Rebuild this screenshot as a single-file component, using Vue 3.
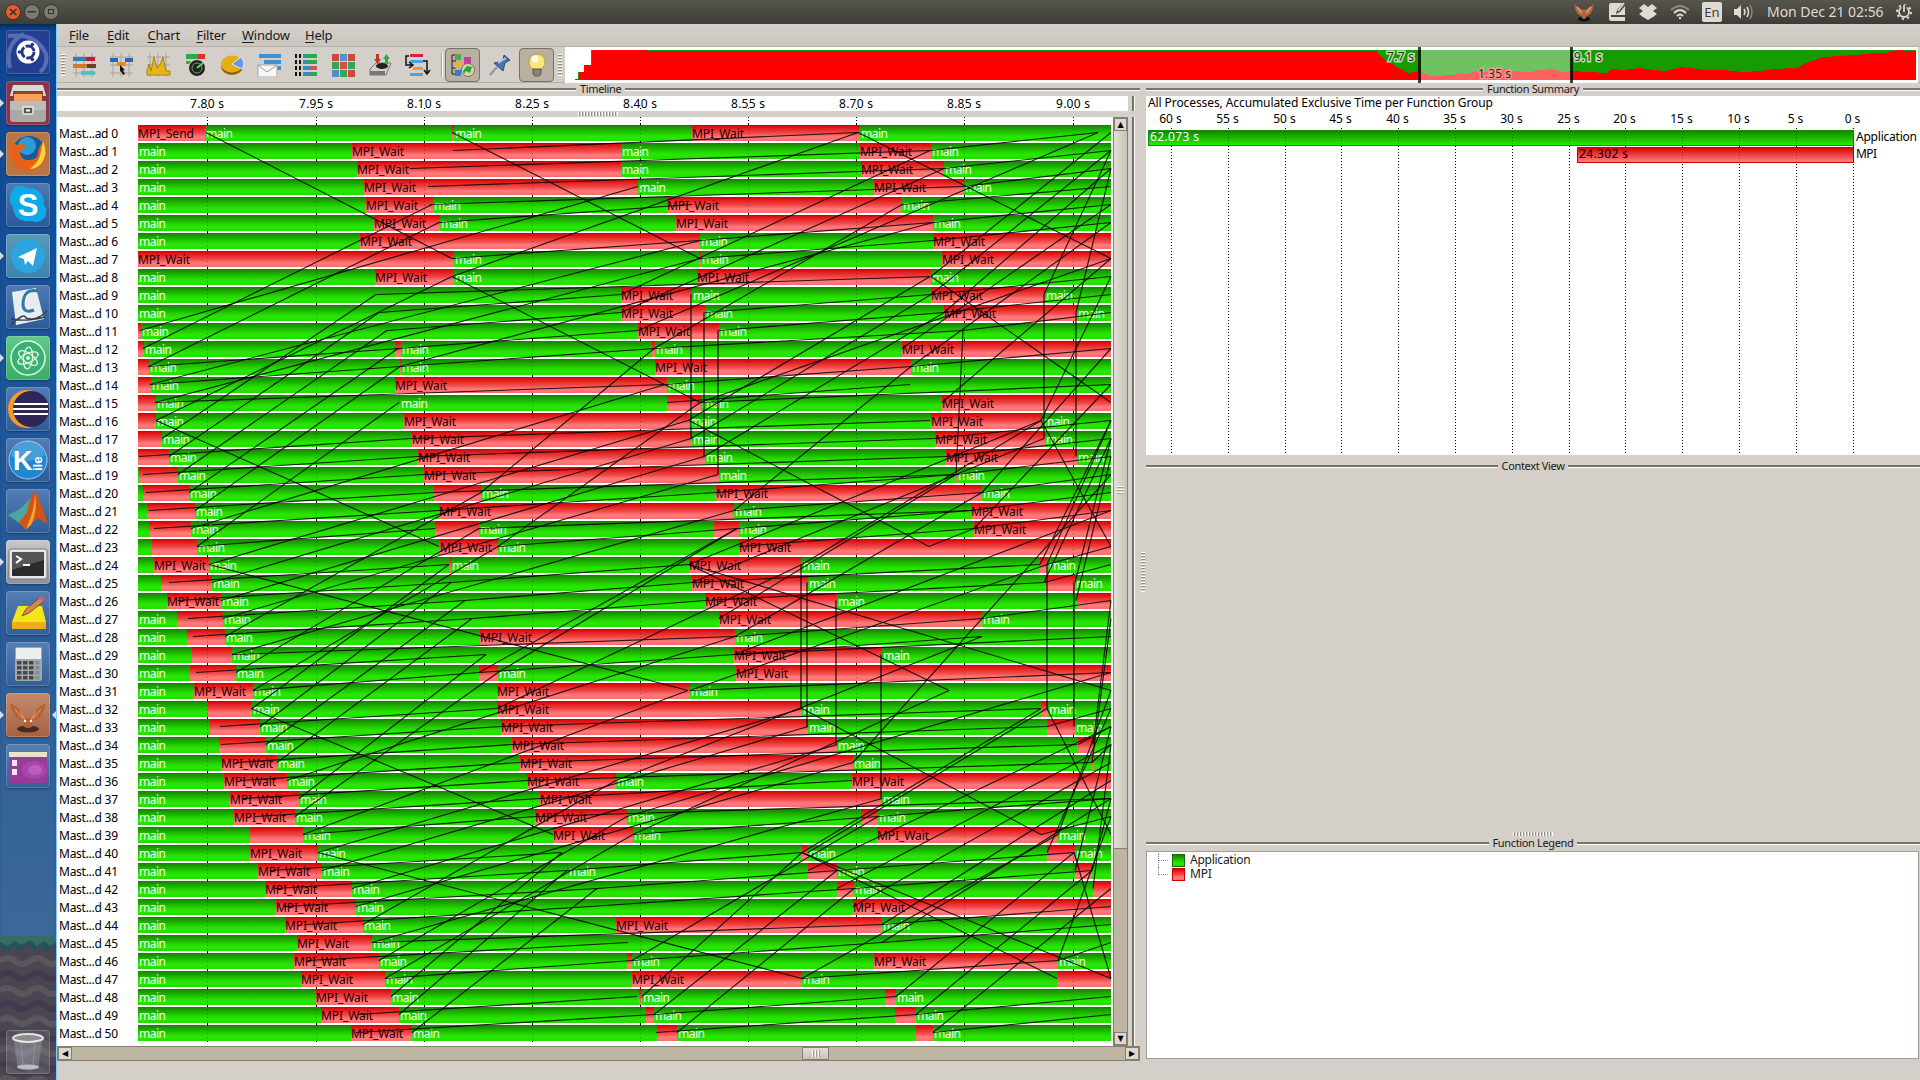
<script setup>
const CHART_LEFT = 138
const CHART_RIGHT = 1111
const PITCH = 18

const menus = [
  { name: 'File', width: 38 }, { name: 'Edit', width: 40.5 }, { name: 'Chart', width: 49 },
  { name: 'Filter', width: 45.5 }, { name: 'Window', width: 63 }, { name: 'Help', width: 30 },
]

const timeTicks = [
  ['7.80 s', 207.5], ['7.95 s', 316.5], ['8.10 s', 424.5], ['8.25 s', 532.5], ['8.40 s', 640.5],
  ['8.55 s', 748.5], ['8.70 s', 856.5], ['8.85 s', 964.5], ['9.00 s', 1073.5],
]

// First letter is the starting state (G: application, R: MPI); numbers are the state changes.
const trace = [
  ['R', 205, 452, 454, 692, 860],
  ['G', 352, 621, 860, 931],
  ['G', 357, 621, 861, 944],
  ['G', 364, 638, 874, 964],
  ['G', 366, 433, 667, 902],
  ['G', 374, 440, 676, 933],
  ['G', 360, 700, 933],
  ['R', 454, 700, 701, 942],
  ['G', 375, 454, 697, 931],
  ['G', 621, 692, 931, 1045],
  ['G', 621, 705, 944, 1077],
  ['R', 141, 638, 719],
  ['R', 144, 395, 401, 652, 655, 902],
  ['R', 149, 400, 401, 655, 911],
  ['R', 151, 395, 667],
  ['R', 156, 399, 400, 667, 701, 942],
  ['R', 156, 404, 689, 931, 1042],
  ['R', 162, 412, 692, 935, 1045],
  ['R', 169, 418, 705, 946, 1077],
  ['G', 139, 178, 424, 719, 956, 957],
  ['G', 143, 189, 434, 481, 716, 982],
  ['G', 147, 195, 439, 734, 971],
  ['G', 149, 191, 435, 479, 714, 739, 974],
  ['G', 152, 197, 440, 498, 739],
  ['G', 154, 209, 450, 451, 689, 802, 1040, 1048],
  ['G', 161, 212, 692, 808, 1045, 1075],
  ['G', 167, 221, 705, 837, 1077],
  ['G', 177, 223, 719, 982],
  ['G', 187, 225, 480, 735],
  ['G', 192, 232, 734, 882],
  ['G', 190, 236, 479, 498, 736],
  ['G', 194, 253, 497, 690],
  ['G', 208, 252, 497, 802, 1041, 1048],
  ['G', 210, 260, 501, 808, 1047, 1075],
  ['G', 219, 266, 512, 837, 1078, 1094],
  ['G', 221, 277, 520, 853, 1092, 1093],
  ['G', 224, 287, 527, 616, 852],
  ['G', 230, 299, 540, 882],
  ['G', 234, 295, 535, 627, 861, 878],
  ['G', 250, 303, 553, 633, 877, 1058],
  ['G', 250, 318, 802, 808, 1047, 1075],
  ['G', 258, 322, 567, 568, 808, 837, 1075, 1092],
  ['G', 265, 352, 837, 854, 1093],
  ['G', 276, 356, 853],
  ['G', 285, 363, 616, 882],
  ['G', 297, 372],
  ['G', 294, 379, 627, 632, 874, 1058],
  ['G', 301, 385, 632, 802, 1058],
  ['G', 316, 391, 639, 642, 885, 896],
  ['G', 321, 399, 646, 654, 895, 916],
  ['G', 351, 412, 657, 677, 916, 933],
]

const rows = trace.map(([first, ...cuts], i) => {
  const edges = [CHART_LEFT, ...cuts, CHART_RIGHT]
  let green = first === 'G'
  const segments = []
  for (let k = 0; k < edges.length - 1; k++) {
    const width = edges[k + 1] - edges[k]
    let label = ''
    if (green && width > 32) label = 'main'
    if (!green && width > 53) label = i === 0 && k === 0 ? 'MPI_Send' : 'MPI_Wait'
    segments.push({ green, width, label })
    green = !green
  }
  return { name: i < 10 ? `Mast...ad ${i}` : `Mast...d ${i}`, segments }
})

// Messages: sender row, sender x, receiver row, receiver x.
const messages = [
  // wrap-around neighbours
  [0, 206, 7, 452], [0, 452, 7, 700], [0, 858, 7, 1111], [8, 452, 15, 700], [8, 931, 15, 1111],
  [16, 156, 23, 439], [16, 689, 23, 929], [16, 1041, 23, 1111], [24, 209, 31, 688], [24, 689, 31, 949],
  [24, 689, 31, 1111], [32, 251, 39, 553], [32, 802, 39, 1041], [32, 1047, 39, 1111], [40, 318, 47, 802],
  [40, 802, 47, 1057], [40, 802, 47, 1111], [40, 1074, 47, 1111],
  // previous rank
  [1, 453, 0, 858], [2, 410, 1, 930], [3, 428, 2, 944], [4, 430, 3, 963], [5, 439, 4, 692], [7, 452, 6, 699],
  [9, 376, 8, 930], [10, 379, 9, 621], [11, 387, 10, 621], [12, 398, 11, 638], [13, 148, 12, 399],
  [14, 150, 13, 400], [13, 400, 12, 654], [15, 155, 14, 665], [18, 139, 17, 411], [17, 411, 16, 930],
  [18, 418, 17, 934], [19, 143, 18, 418], [19, 424, 18, 946], [20, 146, 19, 424], [20, 434, 19, 956],
  [21, 149, 20, 434], [21, 439, 20, 716], [22, 154, 21, 439], [22, 479, 21, 971], [23, 197, 22, 435],
  [23, 498, 22, 737], [25, 169, 24, 449], [26, 178, 25, 451], [25, 451, 24, 689], [27, 188, 26, 465],
  [26, 465, 25, 692], [28, 193, 27, 472], [27, 472, 26, 705], [29, 232, 28, 734], [30, 196, 29, 486],
  [30, 479, 29, 734], [31, 253, 30, 479], [33, 220, 32, 497], [33, 501, 32, 1041], [34, 221, 33, 501],
  [34, 512, 33, 1047], [35, 236, 34, 512], [35, 520, 34, 1077], [36, 240, 35, 520], [36, 527, 35, 1092],
  [37, 243, 36, 527], [37, 540, 36, 852], [38, 255, 37, 540], [38, 535, 37, 1111], [39, 303, 38, 535],
  [39, 633, 38, 878], [41, 270, 40, 562], [42, 275, 41, 567], [41, 567, 40, 802], [43, 284, 42, 597],
  [42, 597, 41, 837], [44, 305, 43, 590], [43, 590, 42, 854], [45, 372, 44, 882], [46, 308, 45, 628],
  [47, 385, 46, 632], [46, 632, 45, 882], [45, 882, 44, 1111], [49, 358, 48, 637], [50, 356, 49, 654],
  [49, 654, 48, 896], [50, 656, 49, 916], [49, 916, 48, 1111], [50, 933, 49, 1111], [47, 802, 46, 1058],
  [46, 1058, 45, 1111], [1, 930, 0, 1098], [2, 944, 1, 1111], [3, 963, 2, 1111], [4, 902, 3, 1111],
  [5, 933, 4, 1111], [6, 699, 5, 933], [7, 700, 6, 933], [6, 933, 5, 1111], [10, 705, 9, 931],
  [9, 931, 8, 1111], [11, 719, 10, 944], [10, 944, 9, 1111], [11, 963, 10, 1111], [12, 654, 11, 963],
  [13, 911, 12, 1111], [14, 665, 13, 911], [15, 667, 14, 910], [15, 700, 14, 1111], [17, 934, 16, 1111],
  [18, 946, 17, 1111], [19, 956, 18, 1111], [20, 716, 19, 956], [20, 982, 19, 1111], [21, 734, 20, 982],
  [21, 971, 20, 1111], [22, 737, 21, 971], [22, 974, 21, 1111], [23, 739, 22, 974], [23, 929, 22, 974],
  [24, 1047, 23, 1111], [25, 692, 24, 1040], [25, 1044, 24, 1111], [26, 705, 25, 1044], [28, 735, 27, 982],
  [29, 734, 28, 982], [29, 734, 28, 1111], [27, 982, 26, 1111], [31, 690, 30, 1111], [33, 1047, 32, 1111],
  [34, 1078, 33, 1111], [35, 1092, 34, 1111], [38, 878, 37, 1111], [39, 1041, 38, 1111], [41, 837, 40, 1074],
  [42, 854, 41, 1092], [44, 882, 43, 1111],
  // neighbour one grid line up
  [11, 140, 3, 638], [12, 143, 4, 432], [13, 149, 5, 439], [8, 452, 0, 858], [14, 150, 6, 700],
  [15, 155, 7, 700], [16, 156, 8, 452], [17, 162, 9, 376], [18, 169, 10, 379], [19, 178, 11, 387],
  [20, 189, 12, 398], [21, 195, 13, 400], [23, 197, 15, 399], [22, 191, 14, 665], [20, 481, 12, 654],
  [23, 498, 15, 700], [16, 688, 8, 930], [9, 621, 1, 930], [10, 621, 2, 944], [11, 638, 0, 1098],
  [12, 654, 4, 902], [13, 400, 5, 933], [15, 700, 7, 1111], [8, 931, 0, 1111], [9, 931, 1, 1111],
  [10, 944, 2, 1111], [12, 902, 4, 1111], [13, 911, 5, 1111], [15, 942, 7, 1111], [9, 1044, 1, 1111],
  [10, 1076, 2, 1111], [16, 1041, 8, 1111], [24, 1040, 16, 1111], [24, 1047, 16, 1111], [25, 1044, 17, 1111],
  [26, 1076, 18, 1111], [25, 1075, 17, 1111], [22, 974, 14, 1111], [20, 982, 12, 1111],
  [24, 209, 16, 688], [25, 212, 17, 691], [26, 221, 18, 704], [27, 223, 19, 718], [28, 225, 20, 481],
  [29, 232, 21, 734], [30, 236, 22, 479], [31, 253, 23, 498], [32, 252, 24, 449], [33, 260, 25, 451],
  [34, 266, 26, 465], [35, 277, 27, 472], [37, 299, 29, 486], [38, 295, 30, 498], [39, 303, 31, 688],
  [36, 287, 28, 735], [40, 318, 32, 802], [41, 322, 33, 808], [42, 352, 34, 837], [43, 356, 35, 853],
  [44, 363, 36, 616], [45, 372, 37, 882], [46, 379, 38, 627], [47, 385, 39, 633], [48, 391, 40, 562],
  [49, 399, 41, 567], [50, 412, 42, 597], [17, 691, 9, 931], [18, 704, 10, 944], [21, 734, 13, 911],
  [24, 689, 16, 1041], [25, 692, 17, 1044], [27, 719, 19, 956], [28, 735, 20, 982], [29, 734, 21, 1111],
  [30, 479, 22, 737], [30, 498, 22, 737], [24, 802, 16, 1041], [31, 690, 24, 1047], [32, 497, 24, 802],
  [35, 853, 19, 1111], [36, 616, 28, 982], [38, 627, 30, 1111], [39, 633, 31, 949], [40, 802, 32, 1041],
  [40, 808, 32, 1047], [41, 808, 33, 1111], [42, 837, 34, 1111], [43, 853, 35, 1111], [44, 882, 36, 1111],
  [45, 882, 37, 1111], [46, 632, 38, 878], [47, 802, 39, 1058], [48, 642, 40, 802], [49, 654, 41, 837],
  [50, 677, 42, 854], [48, 896, 40, 1074], [49, 916, 41, 1092], [50, 933, 42, 1111], [46, 1058, 38, 1111],
  [39, 1058, 31, 1111], [40, 1047, 32, 1111], [41, 1075, 33, 1111], [42, 1093, 34, 1111], [35, 1092, 27, 1111],
  [34, 1093, 26, 1111], [41, 1092, 37, 1111], [11, 963, 19, 956],
]

const barriers = [
  [9, 691, 17], [10, 704, 18], [11, 718, 19], [9, 1044, 17], [10, 1076, 18],
  [24, 801, 32], [25, 807, 33], [26, 836, 34], [29, 881, 37], [24, 1047, 32], [25, 1074, 33],
]
const rowY = (r) => 15.5 + r * PITCH

const summaryTicks = Array.from({ length: 13 }, (_, i) => ({ label: `${60 - i * 5} s`, x: Math.round(25 + i * 56.8) + 0.5 }))

const dock = ['dash', 'files', 'firefox', 'skype', 'telegram', 'texmaker', 'atom', 'eclipse', 'kile', 'matlab', 'terminal', 'notes', 'calc', 'vampir', 'workspace']
const running = ['files', 'firefox', 'telegram', 'atom', 'terminal', 'vampir']
const tools = ['timeline', 'process', 'counter', 'radar', 'pie', 'mail', 'summary', 'matrix', 'io', 'tree']
</script>

<template>
  <div class="screen">
    <header class="panel">
      <i class="wbtn close">×</i><i class="wbtn">−</i><i class="wbtn"><b></b></i>
      <div class="tray">
        <svg width="22" height="20" viewBox="0 0 22 20"><ellipse cx="11" cy="17" rx="6" ry="2.5" fill="#111" /><path d="M1 2Q3 13 8 14L10 17H12L14 14Q19 13 21 2L13 8L11 7L9 8Z" fill="#b0623a" /><path d="M4 5L9 11M18 5L13 11" stroke="#d99060" stroke-width="2" /></svg>
        <svg width="18" height="20" viewBox="0 0 18 20"><path d="M1 3Q1 1 3 1H15L9 8L8 12L12 10L17 4V13H3V15H17V19H3Q1 19 1 16Z" fill="#dfdbd2" /><path d="M16 1L10 9" stroke="#dfdbd2" stroke-width="1.5" /></svg>
        <svg width="18" height="18" viewBox="0 0 18 18"><path d="M5 1L9 4L13 1L18 5L14 8L18 11L14 14L9 17L4 14L0 11L4 8L0 5Z" fill="#dfdbd2" /></svg>
        <svg width="20" height="18" viewBox="0 0 20 18" fill="none" stroke-width="2"><path d="M1 7Q10-1 19 7" stroke="#8a877f" /><path d="M4 10Q10 4 16 10" stroke="#dfdbd2" /><path d="M7 13Q10 10 13 13" stroke="#dfdbd2" /><circle cx="10" cy="15" r="1.2" fill="#dfdbd2" /></svg>
        <span class="lang">En</span>
        <svg width="20" height="16" viewBox="0 0 20 16" fill="none" stroke="#dfdbd2" stroke-width="1.5"><path d="M0 5H3L7 1V15L3 11H0Z" fill="#dfdbd2" stroke="none" /><path d="M10 5Q12 8 10 11M13 3Q16 8 13 13" /><path d="M16 1Q20 8 16 15" stroke="#8a877f" /></svg>
        <span class="clock">Mon Dec 21 02:56</span>
        <svg width="16" height="18" viewBox="0 0 16 18" fill="none" stroke="#dfdbd2"><circle cx="8" cy="9" r="5" stroke-width="1.8" /><circle cx="8" cy="9" r="7" stroke-width="2" stroke-dasharray="2.2 3.3" /><path d="M8 2V9" stroke="#42403a" stroke-width="5" /><path d="M8 2V9" stroke-width="1.8" /></svg>
      </div>
    </header>

    <div class="desktop">
      <aside class="dock">
        <div v-for="d in dock" :key="d" class="tile" :class="d">
          <i v-if="running.includes(d)" class="run"></i>
          <i v-if="d === 'vampir'" class="focus"></i>
          <svg width="44" height="44" viewBox="0 0 44 44">
            <template v-if="d === 'dash'">
              <path d="M2 6Q30 2 40 24Q42 36 34 42M4 38Q-2 14 18 4" fill="none" stroke="#8aa0d4" stroke-width="4" opacity=".5" />
              <circle cx="22" cy="22" r="11.5" fill="#fff" /><circle cx="22" cy="22" r="6" fill="none" stroke="#24377c" stroke-width="2.8" stroke-dasharray="11 1.57" />
              <circle cx="13.500" cy="22" r="1.800" fill="#24377c" /><circle cx="26.300" cy="14.600" r="1.800" fill="#24377c" /><circle cx="26.300" cy="29.400" r="1.800" fill="#24377c" />
            </template>
            <template v-else-if="d === 'files'">
              <path d="M7 4H37L40 15H4Z" fill="#d9d9d7" /><rect x="7" y="10" width="30" height="12" fill="#8e4527" /><rect x="8" y="13" width="28" height="9" fill="#f4a163" />
              <path d="M4 20H40V38Q40 41 37 41H7Q4 41 4 38Z" fill="#a9a9a7" /><path d="M4 20H40V29H4Z" fill="#bcbcba" /><rect x="17" y="26" width="10" height="7" rx="1" fill="#555" stroke="#eee" stroke-width="1.500" /><rect x="20" y="28.500" width="4" height="2" fill="#fff" />
            </template>
            <template v-else-if="d === 'firefox'">
              <circle cx="23" cy="21" r="17" fill="#155a9d" /><circle cx="21" cy="14" r="9" fill="#2f9bd6" /><path d="M5 10L11 13Q19 10 20 15L14 20Q15 29 23 28Q32 28 32 20Q34 12 38 10Q44 26 34 35Q24 43 12 36Q1 28 5 10Z" fill="#e8611b" /><path d="M37 9Q43 22 35 32Q30 37 24 37Q35 28 35 18Z" fill="#fcd33a" />
            </template>
            <template v-else-if="d === 'skype'">
              <path d="M12 3Q17 2 21 5Q38 5 38 22Q42 27 39 34Q34 41 26 38Q8 40 7 24Q2 18 5 10Q7 4 12 3Z" fill="#0cabe8" /><text x="22" y="33" text-anchor="middle" class="glyph" font-size="31" fill="#fff">S</text>
            </template>
            <template v-else-if="d === 'telegram'"><circle cx="22" cy="22" r="17" fill="#2ca5de" /><path d="M12 23L31 14L27 32L22 27L19 31L18 25Z" fill="#fff" /></template>
            <template v-else-if="d === 'texmaker'"><path d="M6 7L30 3L38 34L10 40Z" fill="#e9edf1" /><path d="M32 6Q17 3 17 20Q18 29 28 25" fill="none" stroke="#2c7da6" stroke-width="3" /><path d="M5 40Q18 27 20 33Q30 37 41 26M5 34Q20 37 39 32" fill="none" stroke="#35414b" stroke-width="1.500" /></template>
            <template v-else-if="d === 'atom'"><circle cx="22" cy="22" r="17" fill="#38b179" stroke="#e2f6d6" stroke-width="1.500" /><g fill="none" stroke="#e2f6d6" stroke-width="1.300"><ellipse cx="22" cy="22" rx="11" ry="4.500" transform="rotate(-25 22 22)" /><ellipse cx="22" cy="22" rx="11" ry="4.500" transform="rotate(35 22 22)" /><ellipse cx="22" cy="22" rx="11" ry="4.500" transform="rotate(95 22 22)" /></g><circle cx="22" cy="22" r="2" fill="#e2f6d6" /></template>
            <template v-else-if="d === 'eclipse'"><circle cx="21" cy="22" r="19" fill="#f49b27" /><circle cx="25" cy="22" r="18" fill="#2f2658" /><path d="M8 17H42M7 22H42M8 27H42" stroke="#fff" stroke-width="2" /></template>
            <template v-else-if="d === 'kile'"><circle cx="22" cy="22" r="19" fill="#2188d0" stroke="#9fcbea" /><path d="M5 18Q22 28 39 17Q36 3 22 3Q8 4 5 18" fill="#fff" opacity=".18" /><text x="7" y="32" class="glyph" font-size="27" fill="#fff">K</text><text x="36" y="33" class="glyph" font-size="13" fill="#fff" transform="rotate(-90 36 33)">ile</text></template>
            <template v-else-if="d === 'matlab'"><path d="M2 26L12 21Q20 16 29 3L20 32L13 34Z" fill="#4ba79b" /><path d="M13 34L21 23Q25 4 29 3Q33 7 42 35L32 29Q25 34 20 41Z" fill="#d35312" /><path d="M29 4Q29 21 20 40L25 36Q32 22 29 4" fill="#f5a536" /></template>
            <template v-else-if="d === 'terminal'"><rect x="3" y="9" width="38" height="30" rx="2" fill="#e7e7e7" stroke="#77777a" /><rect x="6" y="12" width="32" height="24" fill="#2b2b29" /><path d="M6 12H38V20Q21 25 6 30Z" fill="#555" /><path d="M10 16L15 19L10 23M17 25H24" fill="none" stroke="#fff" stroke-width="2" /></template>
            <template v-else-if="d === 'notes'"><path d="M12 15H36L40 31H6Z" fill="#f5e41d" /><path d="M6 31H40V38H6Z" fill="#efab18" /><path d="M16 25L20 18L35 6L38 10L23 22Z" fill="#d7894b" stroke="#835426" /><path d="M33 7L36 5L39 9L36 11Z" fill="#e05b6a" /></template>
            <template v-else-if="d === 'calc'"><rect x="9" y="5" width="27" height="34" rx="2" fill="#a6a7a8" /><path d="M10 6H35V17H10Z" fill="#eef0ee" /><g><template v-for="r in 4" :key="r"><rect v-for="c in 4" :key="c" :x="5 + c * 6" :y="14 + r * 5" width="4.500" height="3.500" :fill="c === 4 ? '#75939d' : '#44484c'" /></template></g></template>
            <template v-else-if="d === 'vampir'"><ellipse cx="22" cy="36" rx="11" ry="3.500" fill="#492b1d" /><path d="M4 10Q8 27 18 28L17 33Q22 37 27 33L26 28Q36 27 40 10Q30 14 26 25H18Q14 14 4 10" fill="#b6602e" /><path d="M9 16L17 26M14 18L19 27M35 16L27 26M30 18L25 27" stroke="#d78858" stroke-width="1.500" /><circle cx="19" cy="28" r="1.300" fill="#eee" /><circle cx="25" cy="28" r="1.300" fill="#eee" /></template>
            <template v-else><rect x="3" y="9" width="38" height="30" rx="2" fill="#9a3b9c" /><ellipse cx="28" cy="26" rx="12" ry="9" fill="#c65bc4" opacity=".35" /><ellipse cx="29" cy="26" rx="7" ry="5" fill="#d57bd3" opacity=".45" /><rect x="3" y="8" width="38" height="5" fill="#e8e4c8" /><path d="M6 16H11V22H6ZM6 25H11V31H6Z" fill="#f1e7f4" /></template>
          </svg>
        </div>
        <div class="ground">
          <svg width="57" height="144" viewBox="0 0 57 144">
            <rect width="57" height="144" fill="#4b4552" />
            <path v-for="n in 9" :key="n" :d="`M0 ${10 + n * 15}q8-6 15 0t15 0t15 0t15 0`" fill="none" :stroke="n % 2 ? '#5b565e' : '#423a4c'" stroke-width="6" />
            <path d="M0 0H57V14L52 9L46 18L40 9L34 16L27 8L20 17L13 9L7 18L0 10Z" fill="#235259" /><path d="M0 0H57V6L50 10L44 5L37 10L30 4L22 9L15 5L8 10L0 6Z" fill="#356c63" />
          </svg>
          <div class="tile trash"><svg width="44" height="44" viewBox="0 0 44 44"><path d="M8 9H36L32 38Q22 42 12 38Z" fill="#ccd" opacity=".25" stroke="#bbb" /><ellipse cx="22" cy="8" rx="15" ry="4" fill="#8c8b8e" stroke="#e3e4e2" stroke-width="2" /><path d="M15 13L17 36M29 13L27 36" stroke="#ddd" opacity=".25" /><ellipse cx="22" cy="37" rx="11" ry="2.500" fill="#b8c1bd" /></svg></div>
        </div>
      </aside>

      <main class="app">
        <nav class="menubar"><span v-for="m in menus" :key="m.name" :style="{ width: m.width + 'px' }"><u>{{ m.name[0] }}</u>{{ m.name.slice(1) }}</span></nav>

        <div class="toolbar">
          <i class="grip"></i>
          <div class="tools">
            <svg v-for="t in tools" :key="t" width="37" height="24" viewBox="-6 0 37 24">
              <g v-if="['timeline', 'process', 'counter'].includes(t)" stroke="#a9a59d" stroke-width="1"><path d="M1 4H24M1 12H24M1 20H24M4 0V24M12 0V24M20 0V24" /></g>
              <template v-if="t === 'timeline'"><path d="M1 4H14V8H1Z" fill="#2b7dc4" /><path d="M14 4H23V8H14Z" fill="#c4173b" /><path d="M1 11H15V15H1Z" fill="#d4792a" /><path d="M15 11H24V15H15Z" fill="#684128" /><path d="M9 18H23V22H9Z" fill="#56bdc2" /></template>
              <template v-else-if="t === 'process'"><path d="M1 5H9V9H1ZM16 5H24V9H16Z" fill="#2868b0" /><path d="M8 9H17V13H8Z" fill="#e38a2c" /><path d="M11 12L16 17L14 17L16 21L14 22L12 18L11 19Z" fill="#151515" /></template>
              <path v-else-if="t === 'counter'" d="M1 22V18L3 11L5 18L8 4L11 15L14 12L17 4L20 18H24V22Z" fill="#e6b616" stroke="#aa830a" />
              <template v-else-if="t === 'radar'"><path d="M3 1H22V6H3ZM3 8H8V11H3Z" fill="#2fab46" /><path d="M15 1H22V6H15Z" fill="#d83426" /><circle cx="14" cy="15" r="8.500" fill="#222" stroke="#ddd" /><path d="M14 15L20 10" stroke="#5ddd62" stroke-width="2" /><circle cx="14" cy="15" r="5" fill="none" stroke="#65a269" /></template>
              <template v-else-if="t === 'pie'"><ellipse cx="12" cy="13" rx="11" ry="9" fill="#8f6407" /><ellipse cx="12" cy="11" rx="11" ry="8.500" fill="#e5ae16" /><path d="M12 11L21 4Q26 10 22 16Z" fill="#6995e7" stroke="#dfe9ff" /></template>
              <template v-else-if="t === 'mail'"><path d="M2 1H24V5H2ZM7 7H24V11H7ZM16 13H24V17H16Z" fill="#3f91d1" /><rect x="1" y="12" width="19" height="12" fill="#f7f7f7" stroke="#aaa" /><path d="M1 12L10 19L20 12" fill="none" stroke="#999" /></template>
              <template v-else-if="t === 'summary'"><template v-for="n in 4" :key="n"><path :d="`M1 ${n * 6 - 5}h2v4h-2zm4 0h2v4h-2z`" fill="#111" /><rect x="9" :y="n * 6 - 5" width="14" height="4" :fill="n === 3 ? '#d15363' : '#22ad49'" /><rect x="9" :y="n * 6 - 5" :width="n * 2" height="4" fill="#348bc1" /></template></template>
              <template v-else-if="t === 'matrix'"><rect v-for="n in 9" :key="n" :x="1 + ((n - 1) % 3) * 8" :y="1 + Math.floor((n - 1) / 3) * 8" width="7" height="7" :fill="['#cf483e', '#5b8ecc', '#cf483e', '#32a853', '#d35044', '#2daa58', '#548bc9', '#32a853', '#cf493c'][n - 1]" /></template>
              <template v-else-if="t === 'io'"><path d="M2 16L8 10H23L18 22H2Z" fill="#cfcfcf" stroke="#777" /><path d="M2 18H17V22H2Z" fill="#777" /><ellipse cx="14" cy="13" rx="6" ry="3" fill="#222" /><path d="M8 1H11V6H13L9.500 11L6 6H8Z" fill="#d22d28" /><path d="M17 11V6H15L18.500 1L22 6H20V11Z" fill="#2aae3a" /></template>
              <template v-else><path d="M5 1H18V4H5Z" fill="#c82941" /><path d="M5 7H18V10H5ZM5 20H18V23H5Z" fill="#4ba4df" /><path d="M8 14H18V17H8Z" fill="#e5974d" /><path d="M4 3H1V12H7M18 8H22V20M19 17L22 21L25 17M4 9L8 12L4 15" fill="none" stroke="#111" stroke-width="1.500" /></template>
            </svg>
          </div>
          <i class="sep"></i>
          <span class="toggle"><svg width="24" height="24" viewBox="0 0 24 24"><path d="M5 2H1V21H5M1 8H5M1 15H5" fill="none" stroke="#222" /><path d="M4 1H10V7H4Z" fill="#43b143" /><path d="M4 9H10V15H4Z" fill="#efb12c" /><path d="M4 17H10V23H4Z" fill="#337fc7" /><path d="M13 4H20V11H13Z" fill="#c53f9a" /><circle cx="17" cy="17" r="6.500" fill="#d8d4b0" stroke="#756e5d" /><path d="M12 18L16 13L21 14L19 20L15 18L13 21Z" fill="#29a72a" /></svg></span>
          <svg class="pin" width="24" height="24" viewBox="0 0 24 24"><path d="M2 22L9 14" stroke="#8a97aa" stroke-width="2" /><path d="M6 10L15 8L16 2L22 7L17 10L15 18Z" fill="#4a72b0" stroke="#294976" /><path d="M10 10L18 5" stroke="#a9c6ed" stroke-width="2" /></svg>
          <span class="toggle"><svg width="24" height="24" viewBox="0 0 24 24"><circle cx="12" cy="9" r="8" fill="#f9e879" stroke="#bea43c" /><circle cx="10" cy="6" r="3.500" fill="#fffde0" /><path d="M8 16H16V21L14 23H10L8 21Z" fill="#8c8370" stroke="#555" /></svg></span>
          <i class="grip second"></i>
          <div class="overview">
            <svg width="1353" height="36" viewBox="565 47 1353 36">
              <path d="M575 79H578V72H584V65H591V50H1916V80H575Z" fill="#189b00" />
              <path d="M576 80V79H579V72H584V65H592V50H648V51H1361L1377 51L1380 56L1390 63L1401 69L1408 73L1420 71L1425 74L1431 76L1455 75L1459 73L1467 74L1476 71L1490 72L1503 69L1512 71L1530 72L1541 70L1553 69L1561 72L1572 71L1590 72L1606 73L1612 69L1624 70L1640 68L1655 70L1665 71L1682 67L1690 68L1706 70L1724 70L1742 72L1759 71L1773 69L1797 68L1804 64L1814 60L1824 57L1855 55L1875 53L1887 53L1892 51L1900 50L1905 51L1916 51V80Z" fill="#f00" shape-rendering="crispEdges" />
              <path d="M1361.500 50V61" stroke="#555b00" /><rect x="1421" y="50" width="150" height="30" fill="#fff" opacity=".38" />
              <path d="M1419.500 47V83M1571.500 47V83" stroke="#000" stroke-width="3" opacity=".75" />
              <g class="halo"><text x="1387" y="61" textLength="27">7.7 s</text><text x="1574" y="61" textLength="28">9.1 s</text><text x="1478" y="78" class="dim" textLength="33">1.35 s</text></g>
            </svg>
          </div>
        </div>

        <div class="work">
          <section class="timeline">
            <h2 class="title tl"><span>Timeline</span></h2>
            <div class="axis framed"><svg width="1071" height="15" viewBox="57 0 1071 15"><g v-for="[label, x] in timeTicks" :key="label"><text :x="x - 0.5" y="12" text-anchor="middle" textLength="34">{{ label }}</text><path :d="`M${x} 12V15`" class="tick" /></g></svg></div>
            <div class="splitter"><i></i></div>
            <div class="chartline framed">
              <div class="chart">
                <div v-for="row in rows" :key="row.name" class="row">
                  <span class="name"><svg width="80" height="16"><text x="1" y="13" :textLength="59">{{ row.name }}</text></svg></span>
                  <span v-for="(s, k) in row.segments" :key="k" class="seg" :class="s.green ? 'main' : 'mpi'" :style="{ width: s.width + 'px' }"><svg v-if="s.label" width="60" height="18"><text :x="s.green ? 1 : 0" y="13" :textLength="s.green ? 27 : s.label === 'MPI_Send' ? 56 : 52">{{ s.label }}</text></svg></span>
                </div>
                <svg class="messages" width="1056" height="929" viewBox="57 0 1056 929">
                  <g v-for="[label, x] in timeTicks" :key="label"><path :d="`M${x} 8V925`" class="grid" /><path :d="`M${x} 6V925`" class="gap" /><path :d="`M${x} 0V8`" class="tick" /></g>
                  <line v-for="([a, ax, b, bx], i) in messages" :key="i" :x1="ax" :y1="rowY(a)" :x2="bx" :y2="rowY(b)" />
                  <line v-for="([a, x, b], i) in barriers" :key="'b' + i" :x1="x" :y1="rowY(a)" :x2="x" :y2="rowY(b)" class="wide" />
                </svg>
              </div>
              <div class="vscroll"><b class="arrow up">▲</b><div class="thumb"><i></i></div><b class="arrow down">▼</b></div>
            </div>
            <div class="hscroll"><b class="arrow">◀</b><div class="hthumb"><i></i></div><b class="arrow right">▶</b></div>
          </section>
          <div class="divider"><i></i></div>
          <section class="side">
            <h2 class="title"><span>Function Summary</span></h2>
            <div class="summary">
              <svg width="774" height="359" viewBox="0 0 774 359">
                <defs><linearGradient id="g" x2="0" y2="1"><stop offset="0" stop-color="#148000" /><stop offset="1" stop-color="#27f000" /></linearGradient><linearGradient id="r" x2="0" y2="1"><stop offset="0" stop-color="#d80000" /><stop offset="1" stop-color="#ff8585" /></linearGradient></defs>
                <text x="2" y="11" textLength="345">All Processes, Accumulated Exclusive Time per Function Group</text>
                <g v-for="t in summaryTicks" :key="t.label"><text :x="t.x - 1" y="27" text-anchor="middle">{{ t.label }}</text><path :d="`M${t.x} 32V358`" class="dots" /></g>
                <rect x="2.500" y="34.500" width="705" height="15" fill="url(#g)" stroke="#148f00" /><rect x="431.500" y="51.500" width="276" height="15" fill="url(#r)" stroke="#c00" />
                <path v-for="t in summaryTicks" :key="t.label" :d="`M${t.x} 35V66`" class="dots faint" />
                <text x="4" y="45" fill="#fff" textLength="49">62.073 s</text><text x="433" y="62" textLength="49">24.302 s</text>
                <text x="710" y="45" textLength="61">Application</text><text x="710" y="62" textLength="21">MPI</text>
              </svg>
            </div>
            <h2 class="title ctx"><span>Context View</span></h2>
            <div class="context"><i></i></div>
            <h2 class="title leg"><span>Function Legend</span></h2>
            <ul class="legend"><li><i class="main"></i>Application</li><li><i class="mpi"></i>MPI</li></ul>
          </section>
        </div>
      </main>
    </div>
  </div>
</template>

<style>
html, body { margin: 0; overflow: hidden; }
</style>

<style scoped>
* { box-sizing: border-box; }
i { font-style: normal; }
svg { display: block; flex: none; }
.screen { width: 1920px; height: 1080px; display: flex; flex-direction: column; font: 12px/16px "Noto Sans", sans-serif; color: #1a1a1a; background: #d4cfc8; overflow: hidden; }
.panel { height: 24px; flex: none; display: flex; align-items: center; padding-left: 5px; gap: 3px; background: linear-gradient(#57564d, #3d3c37); }
.wbtn { width: 16px; height: 16px; border-radius: 50%; background: #7b7973; border: 1px solid #38362f; color: #35332e; font: bold 13px/13px "DejaVu Sans", sans-serif; text-align: center; display: block; }
.wbtn.close { background: #ee5a2a; }
.wbtn b { display: block; width: 6px; height: 5px; border: 1px solid #35332e; margin: 4px auto 0; }
.tray { margin-left: auto; display: flex; align-items: center; gap: 13px; padding-right: 8px; color: #dfdbd2; }
.lang { background: #dfdbd2; color: #3c3b37; width: 20px; height: 20px; line-height: 20px; text-align: center; border-radius: 2px; font-size: 13px; margin: 0 -1px; }
.clock { font-size: 14px; width: 116px; white-space: nowrap; letter-spacing: -.05px; }
.desktop { display: flex; height: 1056px; }
.dock { width: 57px; height: 1056px; flex: none; display: flex; flex-direction: column; align-items: flex-start; padding-top: 6px; gap: 7px; background: linear-gradient(#0c4693, #17519b 25%, #3b6897 86%); border-right: 1px solid #7ecbff; box-shadow: inset 0 5px 5px -3px #0a2040; }
.tile { position: relative; width: 44px; height: 44px; margin-left: 6px; flex: none; border-radius: 4px; background: linear-gradient(#6c8fc0aa, #345f99aa); box-shadow: inset 0 0 0 1px #ffffff30, 0 1px 2px #0005; }
.tile.dash { background: #243f91; }
.tile.files { background: #87364a; }
.tile.firefox { background: #b87646; }
.tile.telegram { background: linear-gradient(#5c98b7, #3c83ad); }
.tile.atom { background: linear-gradient(#60c98b, #37ad63); }
.tile.terminal { background: linear-gradient(#c8c9cd, #8f9199); }
.tile.vampir { background: linear-gradient(#c38a6c, #a56142); }
.glyph { font-family: "Liberation Sans", sans-serif; font-weight: bold; }
.run { position: absolute; left: -6px; top: 18px; border: 4px solid transparent; border-left-color: #d5dce8; border-right: 0; }
.focus { position: absolute; right: -6px; top: 18px; border: 4px solid transparent; border-right-color: #d5dce8; border-left: 0; }
.ground { position: relative; width: 56px; height: 144px; margin-top: auto; overflow: hidden; }
.trash { position: absolute; left: 0; top: 94px; background: #aaa3; }
.app { flex: 1; display: flex; flex-direction: column; min-width: 0; }
.menubar { height: 23px; flex: none; display: flex; padding: 3px 0 0 12px; font-size: 13px; background: linear-gradient(#d6d1ca, #cbc6be); border-bottom: 1px solid #b6b0a5; }
.menubar span { white-space: nowrap; letter-spacing: -.25px; }
.menubar u { text-underline-offset: 2px; }
.toolbar { height: 36px; flex: none; display: flex; align-items: center; background: #d4cfc8; border-bottom: 1px solid #b3aea5; }
.grip { width: 4px; height: 22px; flex: none; margin: 0 1px 0 4px; background: repeating-linear-gradient(#fff 0 1px, #928d83 1px 2px, #d4cfc8 2px 3px); }
.tools { display: flex; }
.sep { width: 2px; height: 24px; background: #a8a39a; border-right: 1px solid #fff; margin: 0 2px 0 5px; }
.toggle { width: 35px; height: 34px; flex: none; display: flex; align-items: center; justify-content: center; border: 1px solid #777269; border-radius: 4px; background: #b8b1a2; }
.pin { margin: 0 7px 0 8px; }
.second { margin: 0 3px 0 4px; }
.overview { width: 1353px; height: 36px; background: #fff; }
.halo text { font-size: 12px; fill: #223022; stroke: #e7f0e1cc; stroke-width: 3px; paint-order: stroke; }
.halo .dim { stroke: #ff9c98cc; }
.work { display: flex; height: 997px; }
.timeline { width: 1083px; flex: none; display: flex; flex-direction: column; }
.title { margin: 0; height: 13px; flex: none; display: flex; align-items: center; gap: 4px; font: 11px/12px "Noto Sans", sans-serif; letter-spacing: -.35px; white-space: nowrap; }
.title span { height: 13px; }
.title::before, .title::after { content: ""; flex: 1; height: 2px; margin-bottom: 1px; background: #77736b; border-bottom: 1px solid #fff; }
.tl::before { flex: 0 0 519px; }
.framed::after { content: ""; width: 2px; margin-left: 4px; background: #77736b; border-right: 1px solid #fff; }
.axis { display: flex; height: 15px; flex: none; }
.axis svg { background: #fff; overflow: visible; }
.axis text, .summary text { font-size: 12px; }
.tick { stroke: #000; stroke-dasharray: 1 2; }
.splitter { height: 6px; flex: none; }
.splitter i { display: block; width: 40px; height: 4px; margin: 1px 0 0 521px; background: repeating-linear-gradient(90deg, #fff 0 1px, #928d83 1px 2px, #d4cfc8 2px 3px); }
.chartline { display: flex; height: 929px; flex: none; }
.chart { position: relative; width: 1056px; height: 929px; flex: none; background: #fff; padding-top: 8px; overflow: hidden; }
.row { height: 16px; margin-bottom: 2px; display: flex; }
.name { width: 81px; flex: none; padding-left: 1px; }
.name text { font-size: 12px; }
.seg { height: 16px; flex: none; }
.seg svg { position: relative; z-index: 1; overflow: visible; }
.seg text { font-size: 12px; }
.main { background: linear-gradient(#168000, #22d500 55%, #27e900 75%, #25dc00); }
.main text { fill: #f2fff0; }
.mpi { background: linear-gradient(#d60000, #f34f4f 55%, #ff7c7c 75%, #f76d6d); }
.mpi text { fill: #170000; }
.messages { position: absolute; left: 0; top: 0; z-index: 2; }
.messages line { stroke: #000; stroke-opacity: .85; stroke-width: 1.15; }
.messages .wide { stroke-width: 2; stroke-opacity: .55; }
.grid { stroke: #000; stroke-opacity: .35; stroke-dasharray: 1 3; }
.gap { stroke: #000; stroke-dasharray: 2 16; }
.vscroll { width: 15px; flex: none; display: flex; flex-direction: column; background: #beb5a2; border: 1px solid #857e71; }
.arrow { width: 14px; height: 13px; flex: none; background: #ded9d0; border: 1px solid #857e71; font: 8px/11px "DejaVu Sans", sans-serif; letter-spacing: 0; color: #000; text-align: center; }
.vscroll .arrow { width: 13px; }
.thumb { height: 718px; background: linear-gradient(90deg, #e3dfd8, #c9c2b4); border-bottom: 1px solid #857e71; display: flex; align-items: center; justify-content: center; }
.thumb i { width: 7px; height: 8px; background: repeating-linear-gradient(#fff 0 1px, #a49d90 1px 2px, transparent 2px 3px); }
.down { margin-top: auto; }
.hscroll { width: 1083px; height: 15px; flex: none; display: flex; background: #beb5a2; border: 1px solid #857e71; }
.hthumb { width: 27px; margin-left: 730px; background: linear-gradient(#e3dfd8, #c9c2b4); border: 1px solid #857e71; display: flex; align-items: center; justify-content: center; }
.hthumb i { width: 8px; height: 7px; background: repeating-linear-gradient(90deg, #fff 0 1px, #a49d90 1px 2px, transparent 2px 3px); }
.right { margin-left: auto; }
.divider { width: 6px; padding: 469px 0 0 1px; }
.divider i { display: block; width: 4px; height: 40px; background: repeating-linear-gradient(#fff 0 1px, #928d83 1px 2px, #d4cfc8 2px 3px); }
.side { width: 774px; display: flex; flex-direction: column; }
.summary { height: 359px; flex: none; background: #fff; }
.dots { stroke: #000; stroke-dasharray: 1 2; }
.faint { stroke-opacity: .3; }
.ctx { margin-top: 5px; }
.context { height: 364px; flex: none; display: flex; align-items: flex-end; justify-content: center; padding-bottom: 1px; }
.context i { width: 40px; height: 4px; background: repeating-linear-gradient(90deg, #fff 0 1px, #928d83 1px 2px, #d4cfc8 2px 3px); }
.legend { width: 773px; height: 208px; flex: none; margin: 1px 0 0; padding: 1px 0 0 11px; list-style: none; background: #fff; border: 1px solid #a39e95; }
.legend li { display: flex; align-items: center; height: 14px; font-size: 12px; letter-spacing: -.25px; }
.legend li::before { content: ""; width: 10px; height: 14px; margin-right: 3px; border-left: 1px dotted #888; background: linear-gradient(90deg, #999 50%, transparent 0) 0 7px / 2px 1px repeat-x; }
.legend li:last-child::before { height: 8px; margin-bottom: 6px; }
.legend i { width: 13px; height: 13px; margin-right: 5px; border: 1px solid #146d00; }
.legend i.mpi { border-color: #c00; }
</style>
